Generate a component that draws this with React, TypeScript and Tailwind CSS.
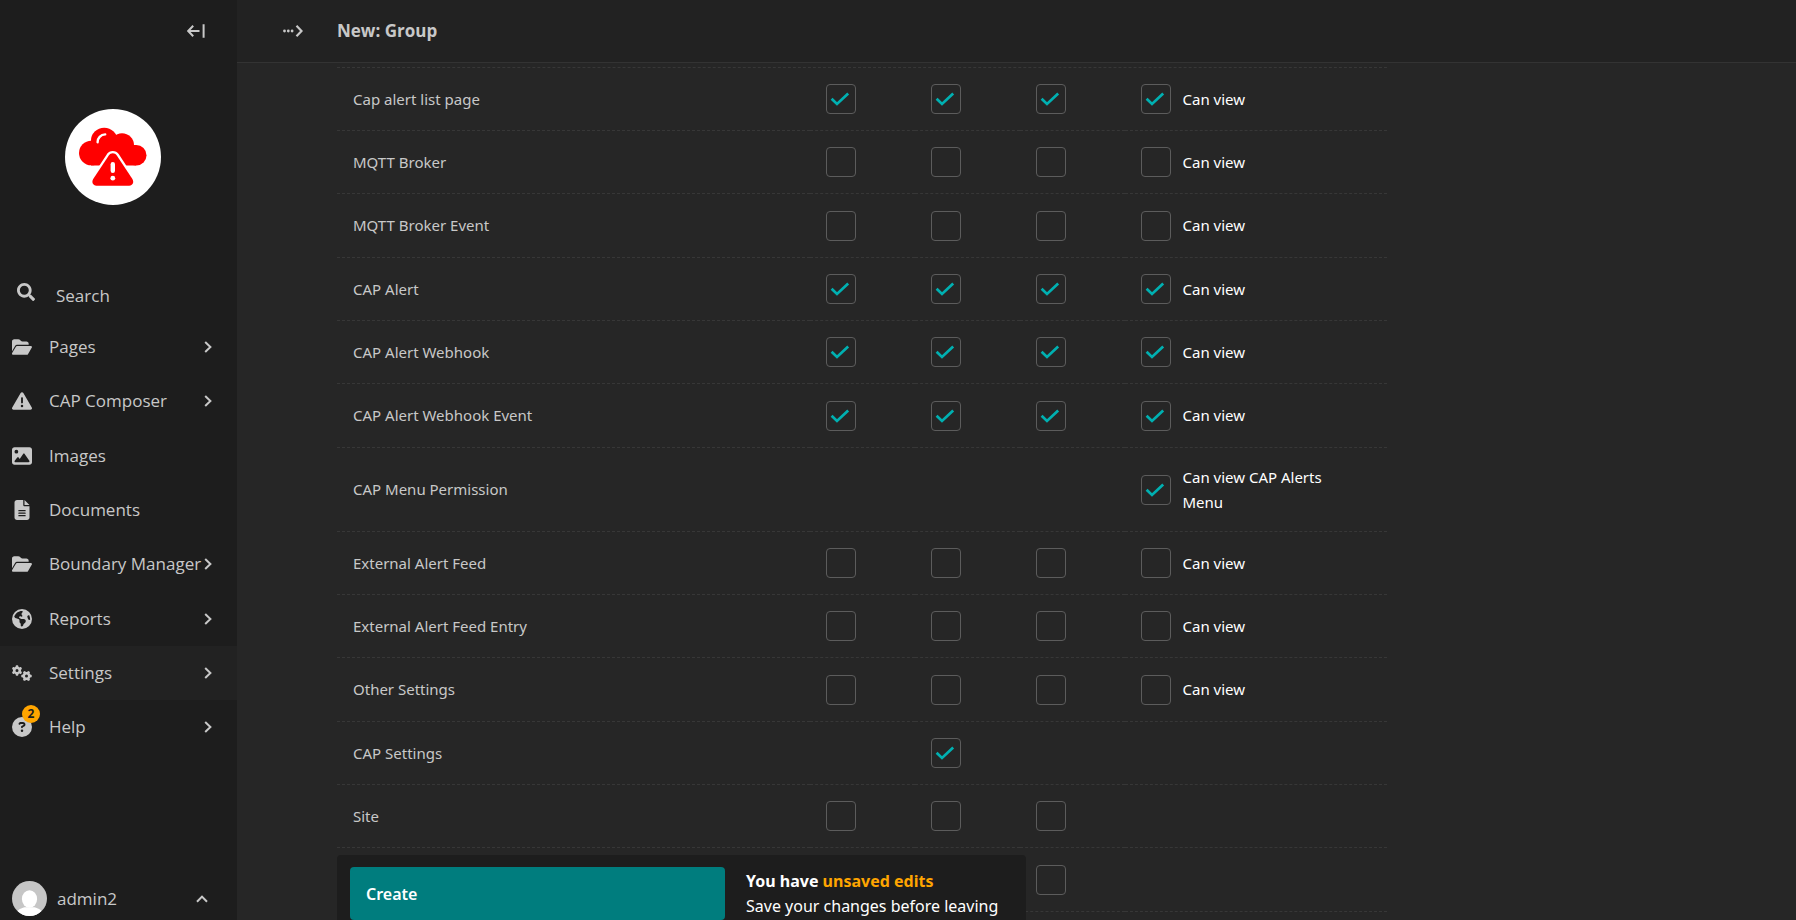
import type { ComponentType, ReactNode } from 'react';
import { FaSearch } from 'react-icons/fa';
import {
  FaCircleQuestion,
  FaEarthAmericas,
  FaFileLines,
  FaFolderOpen,
  FaGears,
  FaImage,
  FaTriangleExclamation,
} from 'react-icons/fa6';

type IconType = ComponentType<{ className?: string }>;

type NavEntry = {
  label: string;
  icon: IconType;
  expandable?: boolean;
  active?: boolean;
  badge?: string;
};

const navEntries: NavEntry[] = [
  { label: 'Pages', icon: FaFolderOpen, expandable: true },
  { label: 'CAP Composer', icon: FaTriangleExclamation, expandable: true },
  { label: 'Images', icon: FaImage },
  { label: 'Documents', icon: FaFileLines },
  { label: 'Boundary Manager', icon: FaFolderOpen, expandable: true },
  { label: 'Reports', icon: FaEarthAmericas, expandable: true },
  { label: 'Settings', icon: FaGears, expandable: true, active: true },
  { label: 'Help', icon: FaCircleQuestion, expandable: true, badge: '2' },
];

type Permission = {
  name: string;
  // add, change, delete: null where the permission does not exist
  basic: (boolean | null)[];
  custom?: { label: string; checked: boolean };
};

const all = (value: boolean) => [value, value, value];
const view = (checked: boolean) => ({ label: 'Can view', checked });

const permissionGroups: Permission[][] = [
  [
    { name: 'Cap alert list page', basic: all(true), custom: view(true) },
    { name: 'MQTT Broker', basic: all(false), custom: view(false) },
    { name: 'MQTT Broker Event', basic: all(false), custom: view(false) },
    { name: 'CAP Alert', basic: all(true), custom: view(true) },
    { name: 'CAP Alert Webhook', basic: all(true), custom: view(true) },
    { name: 'CAP Alert Webhook Event', basic: all(true), custom: view(true) },
  ],
  [
    {
      name: 'CAP Menu Permission',
      basic: [null, null, null],
      custom: { label: 'Can view CAP Alerts Menu', checked: true },
    },
  ],
  [
    { name: 'External Alert Feed', basic: all(false), custom: view(false) },
    { name: 'External Alert Feed Entry', basic: all(false), custom: view(false) },
    { name: 'Other Settings', basic: all(false), custom: view(false) },
    { name: 'CAP Settings', basic: [null, true, null] },
    { name: 'Site', basic: all(false) },
    { name: '', basic: all(false) },
  ],
];

const actions = ['add', 'change', 'delete'];

function Chevron({ className }: { className: string }) {
  return (
    <svg viewBox="0 0 8 12" className={className} fill="none" stroke="currentColor" strokeWidth="2" aria-hidden="true">
      <path d="M1.2 1 6.4 6 1.2 11" />
    </svg>
  );
}

function Logo() {
  return (
    <svg viewBox="0 0 96 96" className="size-24" aria-hidden="true">
      <g fill="#ff0000">
        <circle cx="26.3" cy="44" r="12.3" />
        <circle cx="39.2" cy="32" r="13.3" />
        <circle cx="57" cy="36.3" r="12" />
        <circle cx="71.3" cy="46.2" r="10.2" />
        <path d="M26 36h45v20.4H26z" />
      </g>
      <path
        d="M43.800 46.400c1.900-2.800 6.100-2.800 8 0l15.600 23.700c1.900 3.200.3 6.600-3.200 6.600H31.400c-3.500 0-5.100-3.400-3.200-6.600z"
        fill="#ff0000"
        stroke="#fff"
        strokeWidth="4.600"
        paintOrder="stroke"
      />
      <path d="M32.6 33.3c-.2-4.300 3.200-7.700 7.600-7.900" fill="none" stroke="#fff" strokeWidth="2.4" strokeLinecap="round" />
      <path d="M47.8 55.200v6.600" stroke="#fff" strokeWidth="4.400" strokeLinecap="round" />
      <circle cx="47.8" cy="69.200" r="2.400" fill="#fff" />
    </svg>
  );
}

function NavItem({ label, icon: Icon, expandable, active, badge }: NavEntry) {
  return (
    <li className={`h-[54px] nth-[3n]:h-[55px] ${active ? 'bg-[#222222]' : ''}`}>
      <a href="#" className="flex h-full items-center pl-3 pr-[25px]">
        <span className="relative flex w-[37px] shrink-0">
          <Icon className="size-5" />
          {badge && (
            <span className="absolute -top-3 left-2.5 flex size-[18px] items-center justify-center rounded-full bg-[#ffa500] text-xs font-bold text-[#1d1d1d]">
              {badge}
            </span>
          )}
        </span>
        <span className="grow whitespace-nowrap">{label}</span>
        {expandable && <Chevron className="h-3 w-2 shrink-0" />}
      </a>
    </li>
  );
}

function Sidebar() {
  return (
    <aside className="flex w-[237px] shrink-0 flex-col bg-[#1d1d1d] font-['Open_Sans','Noto_Sans',sans-serif] text-[17px]">
      <div className="flex h-[62px] shrink-0 items-center justify-end pr-8">
        <button type="button" aria-label="Collapse sidebar">
          <svg viewBox="0 0 18 14" className="h-3.5 w-[18px]" fill="none" stroke="currentColor" strokeWidth="2" aria-hidden="true">
            <path d="M12.500 7H1.400M6.200 1.800 1.200 7l5 5.200M16.600.2v13.600" />
          </svg>
        </button>
      </div>
      <a href="#" aria-label="Dashboard" className="ml-[65px] mt-[47px] size-24 shrink-0 rounded-full bg-white">
        <Logo />
      </a>
      <button type="button" className="mt-[66px] flex h-[49px] shrink-0 items-center pl-[17px]">
        <FaSearch className="mb-2 mr-[21px] size-[18px]" />
        <span>Search</span>
      </button>
      <nav aria-label="Main">
        <ul>
          {navEntries.map((entry) => (
            <NavItem key={entry.label} {...entry} />
          ))}
        </ul>
      </nav>
      <button type="button" className="mb-1 mt-auto flex shrink-0 items-center pl-3 pr-[31px] font-medium">
        <svg viewBox="0 0 35 35" className="mr-2.5 size-[35px] rounded-full" aria-hidden="true">
          <path fill="#c6c6c6" d="M0 0h35v35H0z" />
          <ellipse cx="17.500" cy="18" rx="7.600" ry="8.800" fill="#fff" />
          <path fill="#fff" d="M5 31c2-3.500 6-4.600 9-4.800h7c3 .2 7 1.300 9 4.800v4H5z" />
        </svg>
        <span className="grow text-left">admin2</span>
        <Chevron className="h-3 w-2 -rotate-90" />
      </button>
    </aside>
  );
}

function Checkbox({ id, label, checked }: { id: string; label?: string; checked: boolean }) {
  return (
    <span className="relative flex size-[30px] shrink-0">
      <input
        type="checkbox"
        id={id}
        aria-label={label}
        defaultChecked={checked}
        className="peer size-[30px] appearance-none rounded-[4px] border border-[#5c5c5c]"
      />
      <svg
        viewBox="0 0 30 30"
        className="pointer-events-none invisible absolute inset-0 size-[30px] text-[#00b0b1] peer-checked:visible"
        fill="none"
        stroke="currentColor"
        strokeWidth="2.700"
        aria-hidden="true"
      >
        <path d="m5.600 14.800 5.400 5.200L22.200 9.600" />
      </svg>
    </span>
  );
}

function Cell({ children }: { children?: ReactNode }) {
  return <td className="border-b border-dashed border-[#373737] px-4">{children}</td>;
}

function PermissionTable() {
  return (
    <table className="w-full max-w-[1050px] table-fixed border-separate border-spacing-0 border-t border-dashed border-[#373737] text-[15px] leading-[25px]">
      <colgroup>
        <col className="w-[45%]" />
        <col className="w-[10%]" />
        <col className="w-[10%]" />
        <col className="w-[10%]" />
        <col className="w-[25%]" />
      </colgroup>
      {permissionGroups.map((group, g) => (
        <tbody key={g}>
          {group.map(({ name, basic, custom }, r) => (
            <tr key={r} className={custom && custom.label.length > 20 ? 'h-[84px]' : 'h-[63px] nth-[3n]:h-16'}>
              <Cell>{name}</Cell>
              {basic.map((checked, i) => (
                <Cell key={i}>
                  {checked !== null && (
                    <Checkbox id={`${g}-${r}-${actions[i]}`} label={`${name} ${actions[i]}`} checked={checked} />
                  )}
                </Cell>
              ))}
              <Cell>
                {custom && (
                  <div className="flex items-center gap-3 pr-6 text-white">
                    <Checkbox id={`${g}-${r}-custom`} checked={custom.checked} />
                    <label htmlFor={`${g}-${r}-custom`}>{custom.label}</label>
                  </div>
                )}
              </Cell>
            </tr>
          ))}
        </tbody>
      ))}
    </table>
  );
}

export default function App() {
  return (
    <div className="flex h-screen overflow-hidden bg-[#262626] font-['Noto_Sans','Open_Sans',sans-serif] text-[#c8c8c8]">
      <Sidebar />
      <main className="relative flex min-w-0 grow flex-col">
        <header className="flex h-[63px] shrink-0 items-center border-b border-[#333333] bg-[#222222] pl-[46px]">
          <button type="button" aria-label="Show breadcrumbs" className="mr-[34px]">
            <svg viewBox="0 0 20 12" className="h-3 w-5" fill="none" stroke="currentColor" strokeWidth="2.200" aria-hidden="true">
              <path d="m13.500.8 5 5.200-5 5.200" />
              <g fill="currentColor" stroke="none">
                <circle cx="1.500" cy="6" r="1.400" />
                <circle cx="5.300" cy="6" r="1.400" />
                <circle cx="9.100" cy="6" r="1.400" />
              </g>
            </svg>
          </button>
          <h1 className="font-['Open_Sans','Noto_Sans',sans-serif] text-[17px] font-bold">New: Group</h1>
        </header>
        <form className="min-h-0 grow overflow-hidden pl-[100px] pt-1">
          <PermissionTable />
          <footer className="absolute bottom-0 left-[100px] flex rounded-t-[4px] bg-[#1d1d1d] pl-[13px] pr-7 pt-3 text-white">
            <button type="button" className="h-[53px] w-[375px] rounded-[4px] bg-[#007d7e] px-4 text-left font-semibold">
              Create
            </button>
            <p className="ml-[21px] mt-0.5 leading-[25px]">
              <strong>
                You have <span className="text-[#ffa500]">unsaved edits</span>
              </strong>
              <br />
              Save your changes before leaving
            </p>
          </footer>
        </form>
      </main>
    </div>
  );
}
